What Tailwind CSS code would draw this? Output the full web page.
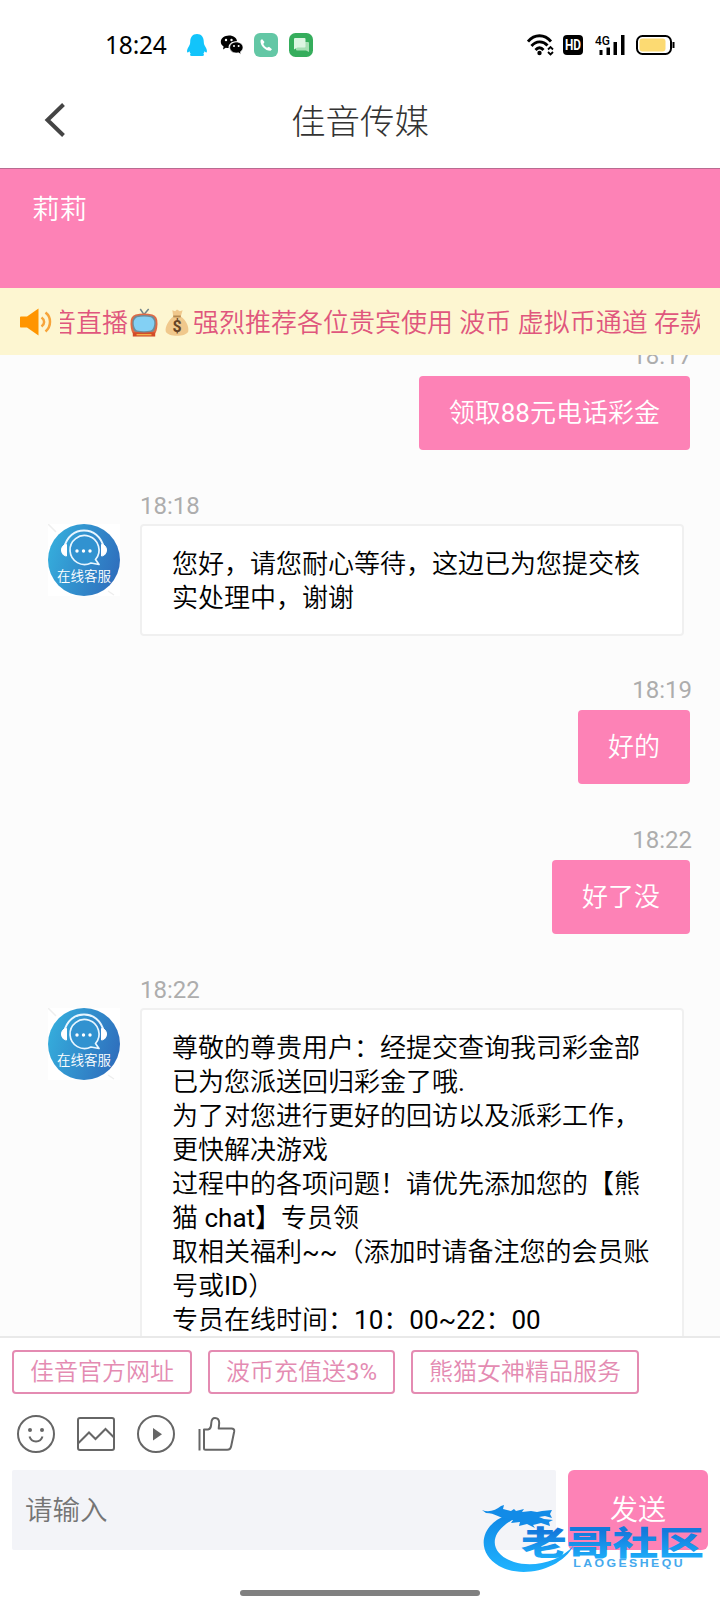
<!DOCTYPE html>
<html lang="zh-CN">
<head>
<meta charset="utf-8">
<title>佳音传媒</title>
<script src="https://cdn.jsdelivr.net/npm/@tailwindcss/browser@4"></script>
</head>
<body class="bg-white">
<svg class="absolute h-0 w-0">
  <defs>
    <linearGradient id="av" x1="0" y1="0.3" x2="1" y2="0.6"><stop offset="0" stop-color="#35addc"/><stop offset="1" stop-color="#2f6fbd"/></linearGradient>
    <symbol id="agent" viewBox="0 0 72 72">
      <rect width="72" height="72" fill="#fff"/>
      <path d="M0 0l8 8M60 67l6 4" stroke="#eee" stroke-width="1.5"/>
      <circle cx="36" cy="36" r="36" fill="url(#av)"/>
      <path d="M16 24C19 12 27 6.500 36 6.500S53 12 56 24" fill="none" stroke="#e8f6ff" stroke-width="2"/>
      <path d="M18.500 20.500c-3 0-5 2.500-5 5.500s2 6 5 6zM53.500 20.500c3 0 5 2.500 5 5.500s-2 6-5 6z" fill="#fff" stroke="#fff"/>
      <path d="M47.500 35.500A14.500 14.500 0 1 0 43 39l8 1.500z" fill="#3192d0" stroke="#e8f6ff" stroke-width="1.700" stroke-linejoin="round"/>
      <circle cx="29" cy="27" r="1.700" fill="#fff"/><circle cx="35.500" cy="27" r="1.700" fill="#fff"/><circle cx="42" cy="27" r="1.700" fill="#fff"/>
    </symbol>
  </defs>
</svg>
<div class="relative flex h-[1600px] w-[720px] flex-col overflow-hidden bg-white font-[Roboto,'Noto_Sans_CJK_SC',sans-serif] font-[350]">

  <!-- status bar -->
  <div class="flex h-20 shrink-0 items-center justify-between pt-[10px] pr-[45px] pl-[105px]">
    <div class="flex items-center">
      <span class="w-[81px] font-['Noto_Sans',sans-serif] text-[24.5px] leading-[30px] font-normal tracking-[-0.2px] whitespace-nowrap text-black">18:24</span>
      <svg class="h-6 w-[22px]" viewBox="0 0 22 24"><path d="M11 1c4.600 0 6.800 3.500 6.800 8 0 2 .7 3.200 2 5.500 1.600 2.800 1.300 5 .5 5-.8 0-1.400-1-1.800-1.200-.2 1.200-.7 1.800-1.200 2.500 1 .6 1 2.200-1 2.200H5.700c-2 0-2-1.600-1-2.200-.5-.7-1-1.300-1.200-2.500-.4.200-1 1.200-1.800 1.200-.8 0-1.100-2.200.5-5 1.300-2.300 2-3.500 2-5.500 0-4.500 2.200-8 6.800-8z" fill="#12c4fb"/></svg>
      <svg class="ml-[12px] h-6 w-6" viewBox="0 0 24 24"><path d="M9 2.500c4.500 0 8 2.600 8 5.800C12 8 8.200 11 8.600 15c-1 0-2 0-2.800-.3L3 16.500l.6-3C1.800 12.400.8 10.800.8 8.800.8 5.300 4.500 2.500 9 2.500z"/><path d="M16.300 9c3.800 0 6.700 2.400 6.700 5.400 0 1.800-1 3.300-2.500 4.300l.5 2.600-2.600-1.500c-4.800 1-8.700-1.800-8.700-5.400 0-3 3-5.400 6.600-5.400z" stroke="#fff" stroke-width=".7"/><g fill="#fff"><circle cx="6" cy="7" r="1.200"/><circle cx="11.500" cy="7" r="1.200"/><circle cx="14" cy="13" r="1"/><circle cx="18.600" cy="13" r="1"/></g></svg>
      <svg class="ml-[10px] h-6 w-6" viewBox="0 0 24 24"><rect width="24" height="24" rx="6" fill="#63c7a5"/><path d="M8 6L6.500 7.500C6 12.500 11.500 18 16.500 17.800L18 16.200 15 13.700 13 14.800C11.300 14 10 12.500 9.300 11L10.500 9z" fill="#fff"/></svg>
      <svg class="ml-[11px] h-6 w-6" viewBox="0 0 24 24"><rect width="24" height="24" rx="6.500" fill="#35ad5c"/><path d="M8 9h11a1 1 0 0 1 1 1v9l-3-1.500H8a1 1 0 0 1-1-1V10a1 1 0 0 1 1-1z" fill="#a5dfb4"/><path d="M6 5h9.500a1 1 0 0 1 1 1v7.500a1 1 0 0 1-1 1H8.500L5 16.500V6a1 1 0 0 1 1-1z" fill="#dcf5e2"/></svg>
    </div>
    <div class="flex items-center">
      <svg class="h-[22px] w-[28px]" viewBox="0 0 28 22"><g fill="none" stroke="#000" stroke-width="2.800"><path d="M1 7.500C7.500-.200 17.500-.200 24 7.500M4.500 12C9 6.500 16 6.500 20.500 11.500M8.500 16c2.500-3 5.500-3 8 0"/></g><circle cx="12.500" cy="19" r="2.200"/><g fill="none" stroke="#000" stroke-width="1.800"><path d="M21 15.500l2.500-2.500 2.500 2.500M21 18l2.500 2.500L26 18"/></g></svg>
      <svg class="ml-[8px] h-5 w-5" viewBox="0 0 20 20"><rect width="20" height="20" rx="4"/><text x="10" y="15" text-anchor="middle" font-family="Roboto" font-weight="700" font-size="14" textLength="16" lengthAdjust="spacingAndGlyphs" fill="#fff">HD</text></svg>
      <svg class="ml-[12px] h-[22px] w-[30px]" viewBox="0 0 30 22"><text x="0" y="11" font-family="Roboto" font-weight="500" font-size="13.500" textLength="15" lengthAdjust="spacingAndGlyphs">4G</text><path d="M4.500 16h3v5h-3zM11.500 13.500h3.500v7.500h-3.500zM18.500 8h3.500v13h-3.500zM26 1h3.500v20h-3.500z"/></svg>
      <svg class="ml-[11px] h-5 w-[39px]" viewBox="0 0 39 20"><rect x="1" y="1" width="34" height="18" rx="5.500" fill="#fff" stroke="#000" stroke-width="2"/><rect x="3.500" y="3.500" width="26" height="13" rx="3" fill="#fcda72"/><path d="M36.500 7h2v6h-2z"/></svg>
    </div>
  </div>

  <!-- title bar -->
  <div class="relative flex h-[88px] shrink-0 items-center justify-center pb-[4px]">
    <svg class="absolute top-[21px] left-[43px] h-[38px] w-[24px]" viewBox="0 0 24 38"><path d="M20.500 3.500L4.500 19 20.500 34.500" fill="none" stroke="#444" stroke-width="4"/></svg>
    <h1 class="text-[34.500px] leading-[44px] font-light text-[#333]">佳音传媒</h1>
  </div>

  <div class="h-[120px] shrink-0 border-t border-[#b96b90] bg-[#fd82b6] px-8 pt-[24px] text-[27.5px] leading-[34px] text-white">莉莉</div>

  <!-- announcement -->
  <div class="flex h-[67px] shrink-0 items-center bg-[#fdf6d1] pr-5 pl-[19px]">
    <svg class="h-[30px] w-[34px] shrink-0" viewBox="0 0 34 30"><path d="M2.500 9.500H8L19.500 1.500V28.500L8 20.500H2.500C1 20.500 1 20 1 19V11C1 10 1 9.500 2.500 9.500z" fill="#ff9500"/><path d="M22.500 10.500c3.500 2.500 3.500 6.500 0 9M26.500 5.500c6 4.500 6 14 0 19" fill="none" stroke="#f7a43a" stroke-width="2.500"/></svg>
    <div class="ml-[7px] flex w-[640px] items-center overflow-hidden pt-[3px] text-[26px] leading-[36px] whitespace-pre text-[#e0567d]">
      <span class="-ml-[10px]">音直播</span>
      <svg class="ml-[2px] h-[30px] w-[28px] shrink-0" viewBox="0 0 30 32"><path d="M11 1l4 6M20 1l-5 6" stroke="#72848a" stroke-width="1.600"/><path d="M6 7Q15 4.500 24 7Q30 9 29.500 17Q29 26 26 28H4Q1 26 .5 17Q0 9 6 7z" fill="#e06a45"/><path d="M3 26h24v4.500H3z" fill="#d24b28"/><path d="M6 8.500Q15 6.500 24 8.500Q28 11 27.500 17Q27 24 24 25.500Q15 27 6 25.500Q3 24 2.500 17Q2 11 6 8.500z" fill="#6f8c98"/><path d="M7.500 9.800Q15 8.500 22.500 9.800Q26.500 12 26 17Q25.500 22 22.500 24Q15 25.500 7.500 24Q4.500 22 4 17Q3.500 12 7.500 9.800z" fill="#83d0f4"/><path d="M7 28.500h16" stroke="#f3b04b" stroke-width="1.500"/></svg>
      <svg class="ml-[5px] h-[30px] w-[28px] shrink-0" viewBox="0 0 28 32"><path d="M9 2.500l3 1 2-2 3 2 3-1-2 6.500C24 13 27 20 26 25 24 31 4 31 2 25 1 20 5 13 10 9z" fill="#f0c88c"/><path d="M10 9h8" stroke="#b58a50" stroke-width="2"/><text x="14" y="26" text-anchor="middle" font-family="Roboto" font-weight="700" font-size="17" fill="#634325">$</text></svg>
      <span class="ml-[2px]">强烈推荐各位贵宾使用 波币 虚拟币通道 存款</span>
    </div>
  </div>

  <!-- conversation -->
  <div class="flex h-[981px] shrink-0 flex-col overflow-hidden bg-[#fcfcfc] text-[26px] leading-[34px]">
    <div class="-mt-[14px] mr-[28px] flex shrink-0 flex-col items-end">
      <time class="pt-[2px] text-2xl leading-[26px] font-normal text-[#adadad]">18:17</time>
      <div class="mt-[7px] mr-[2px] h-[74px] rounded bg-[#fd82b6] px-[30px] pt-[20px] text-white">领取<span class="font-normal">88</span>元电话彩金</div>
    </div>

    <div class="mt-[41px] flex shrink-0 pl-12">
      <div class="relative mt-[33px] h-[72px] w-[72px] shrink-0">
        <svg class="h-[72px] w-[72px]"><use href="#agent"/></svg>
        <span class="absolute inset-x-0 top-[42px] text-center text-[13.5px] leading-5 whitespace-nowrap text-white">在线客服</span>
      </div>
      <div class="ml-5">
        <time class="block pt-[2px] text-2xl leading-[26px] font-normal text-[#adadad]">18:18</time>
        <div class="mt-[5px] h-[112px] w-[544px] rounded border-2 border-[#f0f0f0] bg-white px-[30px] pt-[21px] whitespace-nowrap text-black">您好，请您耐心等待，这边已为您提交核<br>实处理中，谢谢</div>
      </div>
    </div>

    <div class="mt-[39px] mr-[28px] flex shrink-0 flex-col items-end">
      <time class="pt-[2px] text-2xl leading-[26px] font-normal text-[#adadad]">18:19</time>
      <div class="mt-[7px] mr-[2px] h-[74px] rounded bg-[#fd82b6] px-[30px] pt-[20px] text-white">好的</div>
    </div>

    <div class="mt-[41px] mr-[28px] flex shrink-0 flex-col items-end">
      <time class="pt-[2px] text-2xl leading-[26px] font-normal text-[#adadad]">18:22</time>
      <div class="mt-[7px] mr-[2px] h-[74px] rounded bg-[#fd82b6] px-[30px] pt-[20px] text-white">好了没</div>
    </div>

    <div class="mt-[41px] flex shrink-0 pl-12">
      <div class="relative mt-[33px] h-[72px] w-[72px] shrink-0">
        <svg class="h-[72px] w-[72px]"><use href="#agent"/></svg>
        <span class="absolute inset-x-0 top-[42px] text-center text-[13.5px] leading-5 whitespace-nowrap text-white">在线客服</span>
      </div>
      <div class="ml-5">
        <time class="block pt-[2px] text-2xl leading-[26px] font-normal text-[#adadad]">18:22</time>
        <div class="mt-[5px] h-[360px] w-[544px] rounded border-2 border-[#f0f0f0] bg-white px-[30px] pt-[21px] whitespace-nowrap text-black">尊敬的尊贵用户：经提交查询我司彩金部<br>已为您派送回归彩金了哦<span class="font-normal">.</span><br>为了对您进行更好的回访以及派彩工作，<br>更快解决游戏<br>过程中的各项问题！请优先添加您的【熊<br>猫<span class="font-normal"> chat</span>】专员领<br>取相关福利<span class="font-normal">~~</span>（添加时请备注您的会员账<br>号或<span class="font-normal">ID</span>）<br>专员在线时间：<span class="font-normal">10</span>：<span class="font-normal">00~22</span>：<span class="font-normal">00</span></div>
      </div>
    </div>
  </div>

  <!-- composer -->
  <div class="flex grow flex-col border-t-2 border-[#e9e9e9] bg-white px-3">
    <div class="mt-3 flex gap-4 text-2xl leading-[41px] whitespace-nowrap text-[#e48bb2]">
      <span class="h-11 w-[180px] rounded border-2 text-center">佳音官方网址</span>
      <span class="h-11 w-[187px] rounded border-2 text-center">波币充值送<span class="font-normal">3%</span></span>
      <span class="h-11 w-[228px] rounded border-2 text-center">熊猫女神精品服务</span>
    </div>
    <div class="mt-5 flex gap-5 pl-1">
      <svg class="h-10 w-10" viewBox="0 0 40 40" fill="none" stroke="#666" stroke-width="2"><circle cx="20" cy="20" r="18"/><path d="M13.500 22.500c2 6.500 11 6.500 13 0"/><circle cx="14" cy="16" r="2" fill="#666" stroke="none"/><circle cx="26" cy="16" r="2" fill="#666" stroke="none"/></svg>
      <svg class="h-10 w-10" viewBox="0 0 40 40" fill="none" stroke="#666" stroke-width="2"><rect x="2" y="4" width="36" height="32" rx="2"/><path d="M2 29.500L13 18.500 19.500 25 29.500 15 38 23.500"/></svg>
      <svg class="h-10 w-10" viewBox="0 0 40 40" fill="none" stroke="#666" stroke-width="2"><circle cx="20" cy="20" r="18"/><path d="M17 14v12.500l9-6.250z" fill="#666" stroke="none"/></svg>
      <svg class="h-10 w-10" viewBox="0.5 0 40 40" fill="none" stroke="#666" stroke-width="2"><path d="M4 15v21.500"/><path d="M8.500 15.500h4c3-.500 3-3 3.300-6.500.2-3 .7-5 3.700-5s4.200 2 4.200 5l-.5 5.500H36c2 0 3 1 2.700 3l-3 14.500c-.4 2.500-1.700 3.800-4 3.800H10c-1 0-1.500-.500-1.500-1.500z" stroke-linejoin="round"/></svg>
    </div>
    <div class="mt-4 flex h-[80px]">
      <div class="h-[80px] w-[544px] rounded-[2px] bg-[#f3f4f8] pl-[13px] text-[27.5px] leading-[82px] text-[#757575]">请输入</div>
      <div class="ml-3 h-[80px] w-[140px] rounded-[6px] bg-[#fd82b6] text-center text-[28px] leading-[82px] text-white">发送</div>
    </div>
  </div>

  <!-- gesture handle -->
  <div class="absolute top-[1590px] left-[240px] h-[6px] w-[240px] rounded-full bg-[#808080]"></div>

  <!-- community badge -->
  <svg class="absolute top-[1496px] left-[476px] h-[84px] w-[236px]" viewBox="0 0 236 84">
    <defs><linearGradient id="wm" gradientUnits="userSpaceOnUse" x1="0" y1="8" x2="0" y2="76"><stop offset="0" stop-color="#0c7fe0"/><stop offset="1" stop-color="#21b4ff"/></linearGradient>
    <linearGradient id="wt" x1="0" y1="0" x2="0" y2="1"><stop offset="0.300" stop-color="#1479dc"/><stop offset="0.900" stop-color="#1cb0fa"/></linearGradient></defs>
    <path d="M31 19C3 29 0 57 23 70c23 13 62 4 75-21C84 66 57 72 38 66 14 58 10 37 40 22z" fill="url(#wm)"/>
    <path d="M6 14c7 3 14 0 19-4l3-1-1 4 8 2 3-2 2 2 8-2-2 3 9-1 6 1 5-1 10-1-2 4 2 4-7-2-6 1 5 2 9 1-4 2 1 4-9-3-8 2 2 3-8-4-8 2 1-4-9 1 2-3-6-1c-7-1-12-6-21-6z" fill="#128be7"/>
    <text x="45" y="59" font-family="Noto Sans CJK SC" font-weight="900" font-size="33" textLength="183" lengthAdjust="spacingAndGlyphs" fill="url(#wt)">老哥社区</text>
    <text x="79" y="71" transform="scale(1.230 1)" font-family="Liberation Sans" font-weight="700" font-size="10" textLength="89" lengthAdjust="spacing" fill="#45a9ed">LAOGESHEQU</text>
  </svg>
</div>
</body>
</html>
